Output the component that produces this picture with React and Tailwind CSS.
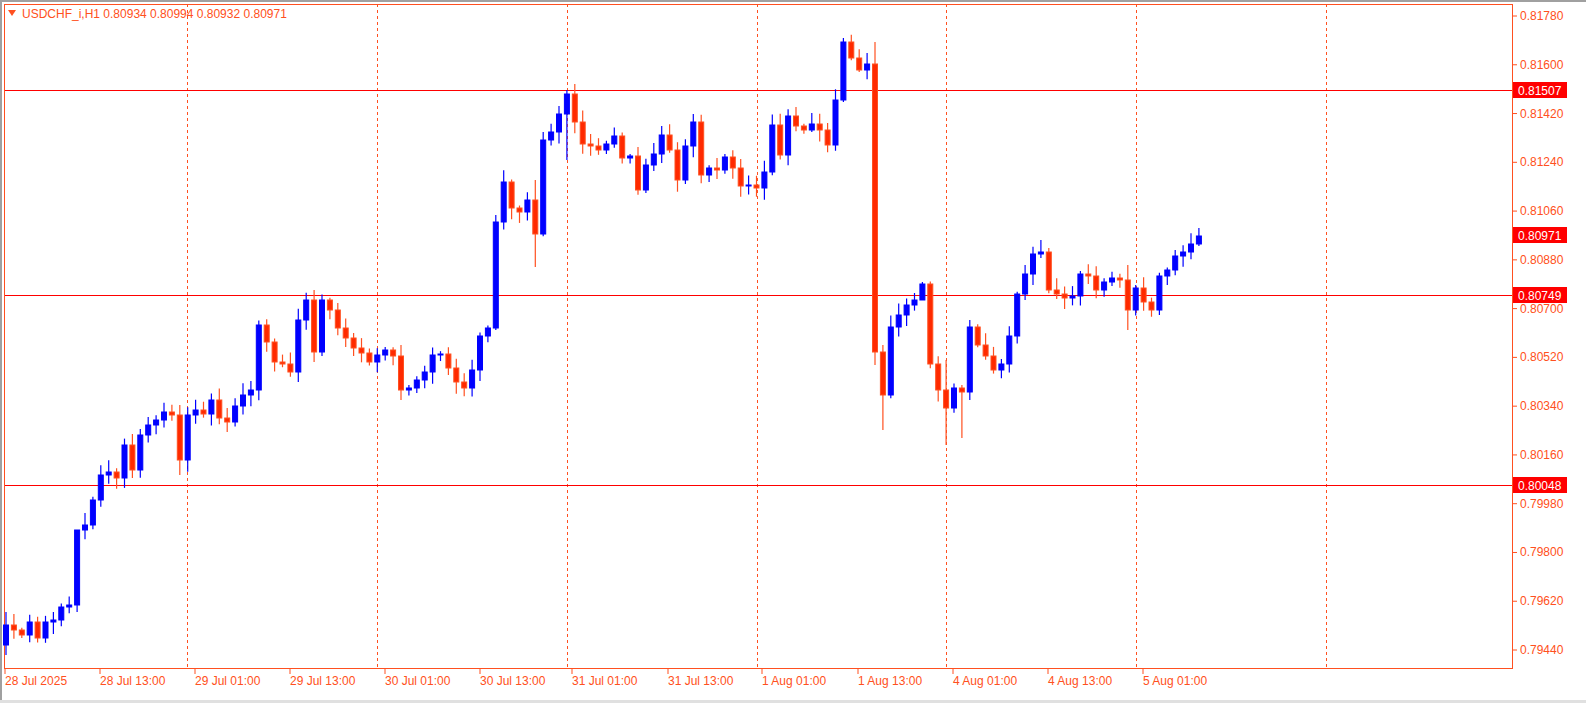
const closes=[625,630,635,622,638,622,620,607,605,530,525,500,475,472,478,445,470,435,425,420,412,415,460,415,410,414,400,418,422,406,395,390,325,342,362,364,372,320,300,352,300,310,328,338,348,353,362,355,350,356,390,388,380,372,355,354,368,382,388,370,336,328,222,182,208,212,200,234,140,132,114,94,122,144,146,150,144,136,158,156,190,165,154,135,150,180,146,122,175,168,170,157,168,186,185,188,172,125,155,116,126,130,124,130,145,100,42,58,70,64,352,395,327,315,305,300,284,364,390,408,388,392,327,345,356,370,364,336,294,274,254,252,290,294,298,296,274,276,290,282,278,280,310,288,302,310,276,270,256,252,244,236];
const wickOv={0:[612,655],9:[560,612],22:[405,475],39:[290,362],50:[345,400],62:[215,330],67:[180,267],71:[90,160],106:[38,102],110:[42,365],111:[345,430],116:[282,300],119:[360,445],121:[385,438],122:[320,400],131:[240,258],142:[265,330],151:[228,246]};
const yOf=p=>16+(0.8178-p)/0.0018*48.77;
const prices=["0.81780","0.81600","0.81420","0.81240","0.81060","0.80880","0.80700","0.80520","0.80340","0.80160","0.79980","0.79800","0.79620","0.79440"];
const times=[[5,"28 Jul 2025"],[100,"28 Jul 13:00"],[195,"29 Jul 01:00"],[290,"29 Jul 13:00"],[385,"30 Jul 01:00"],[480,"30 Jul 13:00"],[572,"31 Jul 01:00"],[668,"31 Jul 13:00"],[762,"1 Aug 01:00"],[858,"1 Aug 13:00"],[953,"4 Aug 01:00"],[1048,"4 Aug 13:00"],[1143,"5 Aug 01:00"]];
const OR="#ff5020";
export default function App(){
  const candles=closes.map((c,i)=>{
    const o=i===0?645:closes[i-1];
    const x=6+i*7.9;
    const top=Math.min(o,c),bot=Math.max(o,c);
    const r1=Math.abs(Math.sin(i*12.9898)*43758.5)%1, r2=Math.abs(Math.sin(i*78.233)*12345.6)%1;
    let hi=top-2-r1*10, lo=bot+2+r2*10;
    if(wickOv[i]){hi=wickOv[i][0];lo=wickOv[i][1];}
    const up=c<o;
    const h=Math.max(bot-top,1);
    return <g key={i}>
      <line x1={x} x2={x} y1={hi} y2={lo} stroke={up?"#0000ff":OR} strokeWidth="1.2"/>
      <rect x={x-2.5} y={top} width="5" height={h} fill={up?"#0000ff":"#ff2a00"} stroke={up?"#0000ff":OR} strokeWidth="1"/>
    </g>;
  });
  return <div className="w-[1586px] h-[703px] bg-white overflow-hidden" style={{fontFamily:"'Liberation Sans', Arial, sans-serif"}}>
    <svg width="1586" height="703" className="block">
      <rect x="0" y="0" width="1586" height="2" fill="#a0a0a0"/>
      <rect x="0" y="0" width="2" height="703" fill="#a0a0a0"/>
      <rect x="0" y="700" width="1586" height="3" fill="#e0e0e0"/>
      {[187,377,567,757,946,1136,1326].map(x=><line key={x} x1={x+0.5} x2={x+0.5} y1="4" y2="668" stroke={OR} strokeDasharray="3 3"/>)}
      {[90,295,485].map(y=><line key={y} x1="4" x2="1512" y1={y+0.5} y2={y+0.5} stroke="#ff0000"/>)}
      <rect x="4.5" y="4.5" width="1508" height="664" fill="none" stroke={OR}/>
      {candles}
      <polygon points="8,10 16,10 12,16" fill={OR}/>
      <text x="22" y="18" fontSize="12" fill={OR}>USDCHF_i,H1  0.80934 0.80994 0.80932 0.80971</text>
      {prices.map(p=>{const y=yOf(parseFloat(p));return <g key={p}>
        <line x1="1513" x2="1517" y1={y} y2={y} stroke={OR}/>
        <text x="1520" y={y+4} fontSize="12" fill={OR}>{p}</text></g>})}
      {[[90,"0.81507"],[235,"0.80971"],[295,"0.80749"],[485,"0.80048"]].map(([y,t])=><g key={t}>
        <rect x="1513" y={y-8} width="54" height="16" fill="#ff0000"/>
        <text x="1518" y={y+5} fontSize="12" fill="#fff">{t}</text></g>)}
      {times.map(([x,t])=><g key={t}>
        <line x1={x} x2={x} y1="669" y2="674" stroke={OR}/>
        <text x={x} y="685" fontSize="12" fill={OR}>{t}</text></g>)}
    </svg>
  </div>;
}
